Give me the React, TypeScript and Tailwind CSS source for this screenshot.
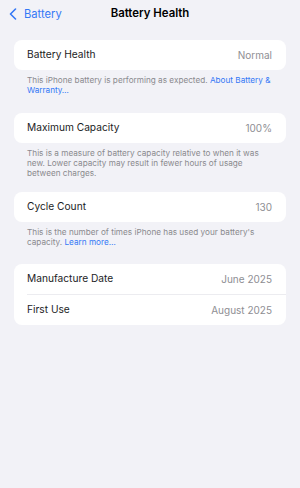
import React from "react";

function Row({ label, value }: { label: string; value: string }) {
  return (
    <div className="flex items-center justify-between h-[30px] pr-[14px]">
      <span className="text-[10.2px] text-[#1c1c1e]">{label}</span>
      <span className="text-[10px] text-[#8e8e93]">{value}</span>
    </div>
  );
}

function Footer({ children }: { children: React.ReactNode }) {
  return (
    <div className="px-[13px] pt-[5px] text-[8.2px] leading-[10px] text-[#8a8a8e]">
      {children}
    </div>
  );
}

export default function App() {
  return (
    <div
      className="w-[300px] h-[488px] bg-[#f2f2f7] overflow-hidden"
      style={{ fontFamily: "Inter, 'Noto Sans', sans-serif" }}
    >
      <div className="relative h-[28px] flex items-center">
        <div className="flex items-center pl-[9px] text-[#3478f6]">
          <svg width="8" height="12" viewBox="0 0 8 12" className="mt-[1px]">
            <path d="M6.5 1 L1.5 6 L6.5 11" fill="none" stroke="#3478f6" strokeWidth="1.6" strokeLinecap="round" strokeLinejoin="round" />
          </svg>
          <span className="ml-[7px] text-[11.2px]">Battery</span>
        </div>
        <div className="absolute inset-x-0 top-0 h-[28px] flex items-center justify-center text-[11.4px] font-semibold text-black">
          Battery Health
        </div>
      </div>

      <div className="px-[14px] pt-[12px]">
        <div className="bg-white rounded-[8px] pl-[13px]">
          <Row label="Battery Health" value="Normal" />
        </div>
        <Footer>
          <div>
            This iPhone battery is performing as expected.{" "}
            <span className="text-[#3478f6]">About Battery &amp;</span>
          </div>
          <div className="text-[#3478f6]">Warranty…</div>
        </Footer>

        <div className="bg-white rounded-[8px] pl-[13px] mt-[18px]">
          <Row label="Maximum Capacity" value="100%" />
        </div>
        <Footer>
          <div>This is a measure of battery capacity relative to when it was</div>
          <div>new. Lower capacity may result in fewer hours of usage</div>
          <div>between charges.</div>
        </Footer>

        <div className="bg-white rounded-[8px] pl-[13px] mt-[14px]">
          <Row label="Cycle Count" value="130" />
        </div>
        <Footer>
          <div>This is the number of times iPhone has used your battery's</div>
          <div>
            capacity. <span className="text-[#3478f6]">Learn more…</span>
          </div>
        </Footer>

        <div className="bg-white rounded-[8px] pl-[13px] mt-[17px]">
          <Row label="Manufacture Date" value="June 2025" />
          <div className="h-px bg-[#ececf0]" />
          <Row label="First Use" value="August 2025" />
        </div>
      </div>
    </div>
  );
}
